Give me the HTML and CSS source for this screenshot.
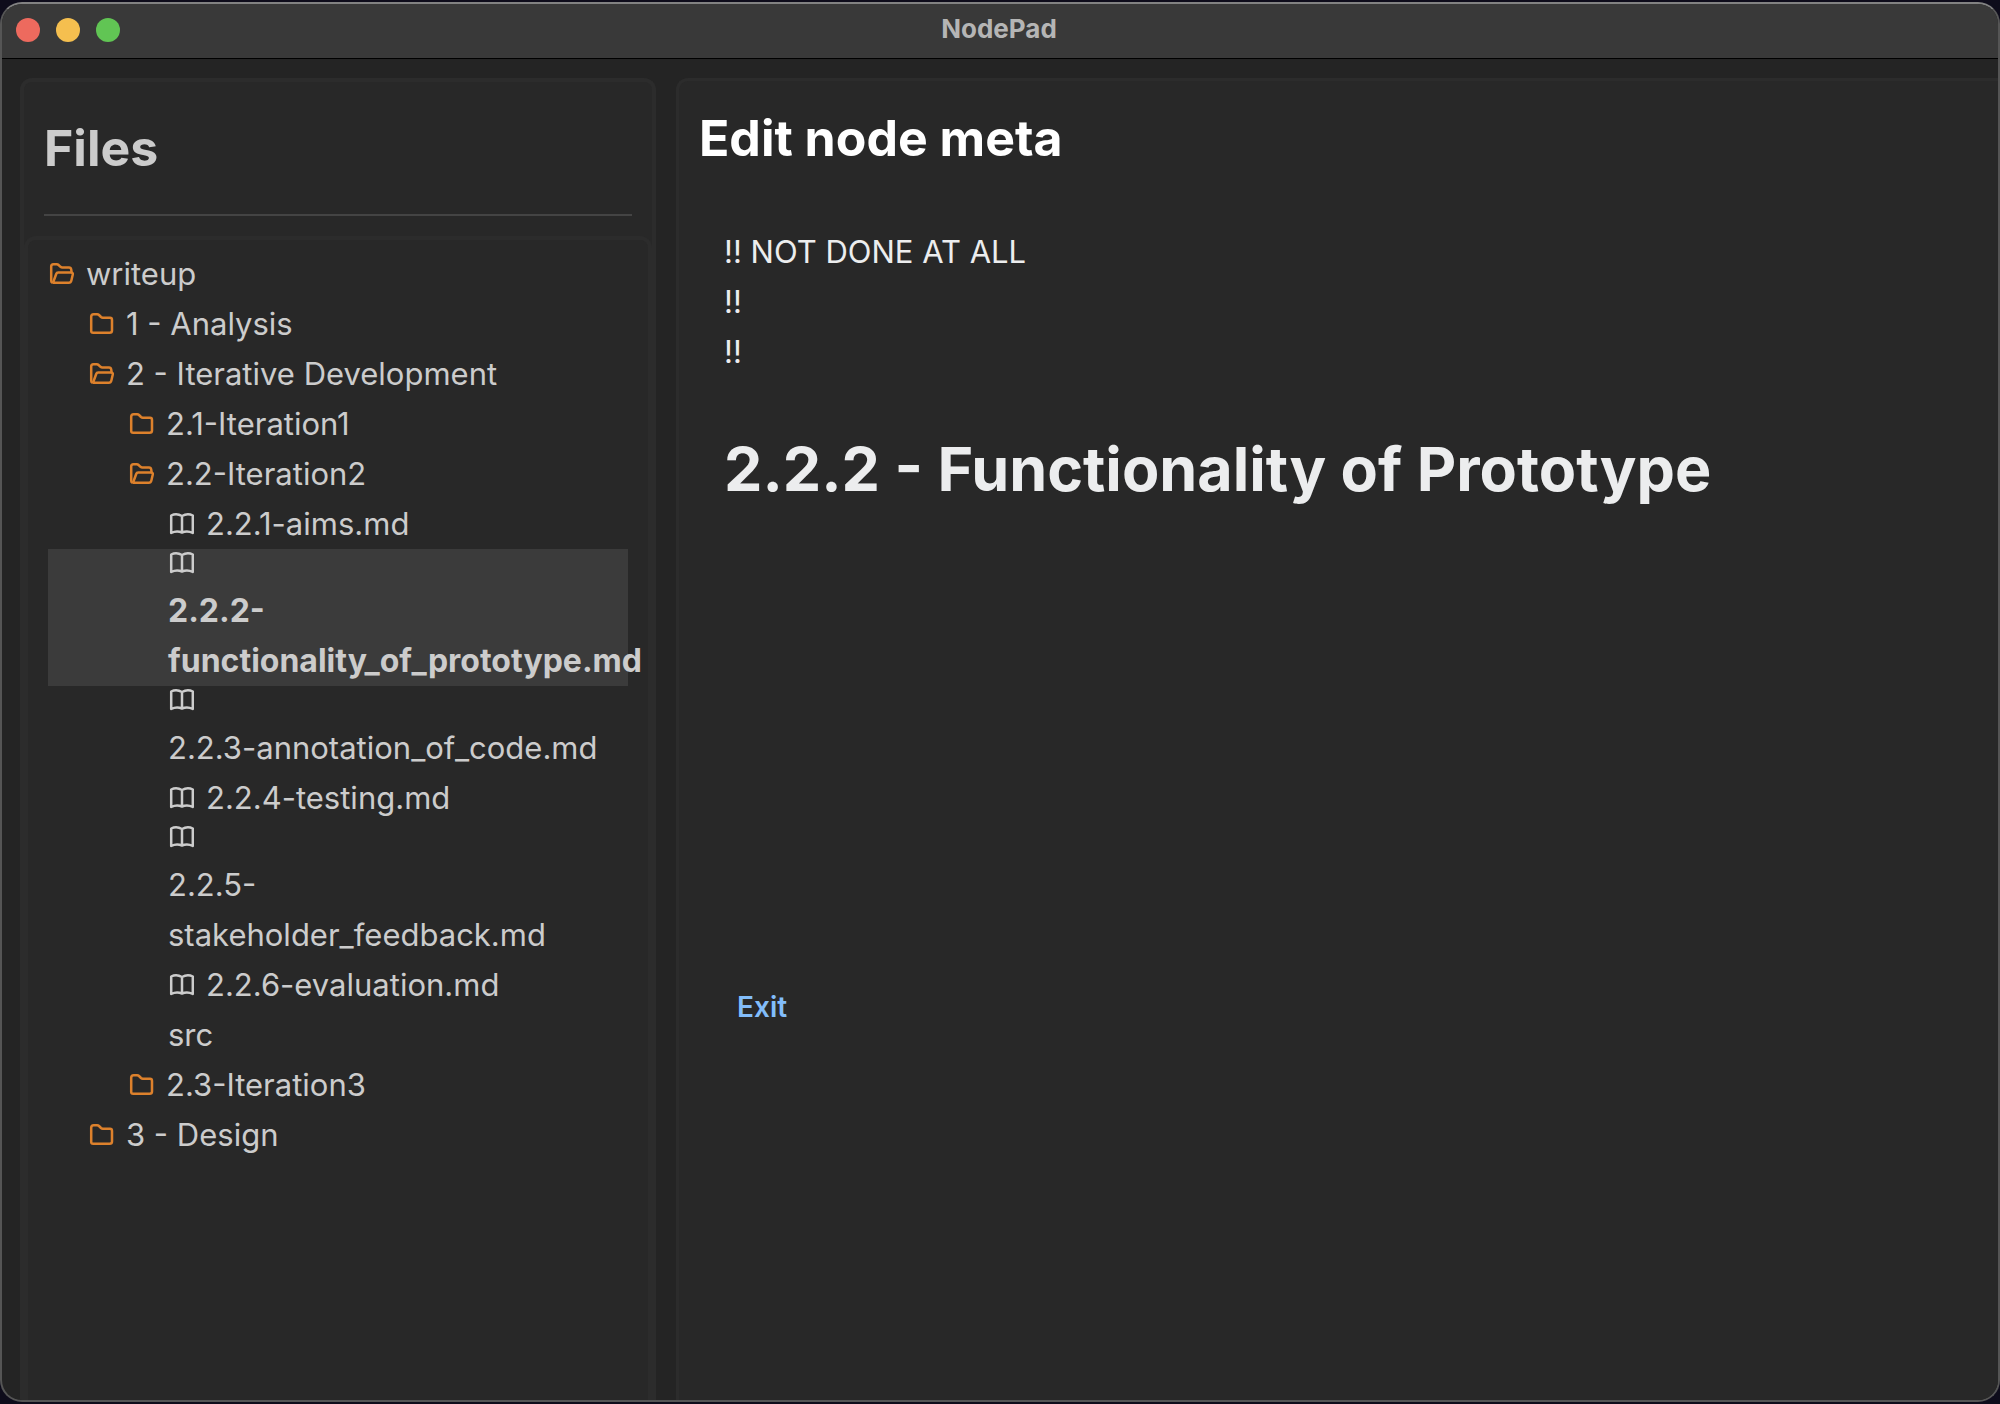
FILE: index.html
```html
<!DOCTYPE html>
<html lang="en">
<head>
<meta charset="utf-8">
<title>NodePad</title>
<link rel="stylesheet" href="styles.css">
</head>
<body>
<svg class="symbols" aria-hidden="true">
  <symbol id="folder" viewBox="-1 0 26 24">
    <path d="M2.2 19V4.800Q2.200 2.200 4.800 2.200H8.200Q9.200 2.200 10 3L12 5Q12.800 5.700 13.800 5.700H21Q23 5.700 23 7.900V18.500Q23 20.800 20.600 20.800H4.200Q2.200 20.800 2.200 19Z" fill="none" stroke="currentColor" stroke-width="2.500" stroke-linejoin="round"/>
  </symbol>
  <symbol id="folder-open" viewBox="-1 0 26 24">
    <path d="M3 20.500Q2.200 20 2.200 18.800V4.500Q2.200 2.200 4.500 2.200H7.800Q8.800 2.200 9.600 3L11.500 4.800Q12.300 5.500 13.300 5.500H20Q22 5.500 22.300 7.800L22.500 10.200" fill="none" stroke="currentColor" stroke-width="2.500" stroke-linecap="round"/>
    <path d="M4 20.800L7.200 12Q7.700 10.600 9.200 10.600H22Q24.200 10.600 23.800 12.400L22.300 18.800Q21.800 20.800 19.800 20.800H4" fill="none" stroke="currentColor" stroke-width="2.500" stroke-linejoin="round"/>
  </symbol>
  <symbol id="book" viewBox="-1 0 26 24">
    <path d="M13 4Q7.500 0.800 2.200 3.500V21Q7.500 18.300 13 20.500Q18.500 18.300 23.800 21V3.500Q18.500 0.800 13 4V20.500" fill="none" stroke="currentColor" stroke-width="2.500" stroke-linejoin="round"/>
  </symbol>
</svg>
<div class="window">
  <header class="titlebar">
    <div class="controls">
      <button class="control control-close" type="button" aria-label="Close"></button>
      <button class="control control-minimize" type="button" aria-label="Minimize"></button>
      <button class="control control-zoom" type="button" aria-label="Zoom"></button>
    </div>
    <div class="window-title">NodePad</div>
  </header>
  <div class="workspace">
    <aside class="sidebar">
      <h2 class="sidebar-title">Files</h2>
      <hr class="divider">
      <nav class="tree" aria-label="Files">
        <ul class="level">
          <li><a class="item depth-0" href="#writeup"><svg class="icon folder"><use href="#folder-open"/></svg><span>writeup</span></a>
            <ul class="level">
              <li><a class="item depth-1" href="#analysis"><svg class="icon folder"><use href="#folder"/></svg><span>1 - Analysis</span></a></li>
              <li><a class="item depth-1" href="#development"><svg class="icon folder"><use href="#folder-open"/></svg><span>2 - Iterative Development</span></a>
                <ul class="level">
                  <li><a class="item depth-2" href="#iteration1"><svg class="icon folder"><use href="#folder"/></svg><span>2.1-Iteration1</span></a></li>
                  <li><a class="item depth-2" href="#iteration2"><svg class="icon folder"><use href="#folder-open"/></svg><span>2.2-Iteration2</span></a>
                    <ul class="level">
                      <li><a class="item depth-3" href="#aims"><svg class="icon"><use href="#book"/></svg><span>2.2.1-aims.md</span></a></li>
                      <li><a class="item depth-3 stacked selected" href="#functionality" aria-current="page"><svg class="icon"><use href="#book"/></svg><span>2.2.2-<br>functionality_of_prototype.md</span></a></li>
                      <li><a class="item depth-3 stacked" href="#annotation"><svg class="icon"><use href="#book"/></svg><span>2.2.3-annotation_of_code.md</span></a></li>
                      <li><a class="item depth-3" href="#testing"><svg class="icon"><use href="#book"/></svg><span>2.2.4-testing.md</span></a></li>
                      <li><a class="item depth-3 stacked" href="#feedback"><svg class="icon"><use href="#book"/></svg><span>2.2.5-<br>stakeholder_feedback.md</span></a></li>
                      <li><a class="item depth-3" href="#evaluation"><svg class="icon"><use href="#book"/></svg><span>2.2.6-evaluation.md</span></a></li>
                      <li><a class="item depth-3" href="#src"><span>src</span></a></li>
                    </ul>
                  </li>
                  <li><a class="item depth-2" href="#iteration3"><svg class="icon folder"><use href="#folder"/></svg><span>2.3-Iteration3</span></a></li>
                </ul>
              </li>
              <li><a class="item depth-1" href="#design"><svg class="icon folder"><use href="#folder"/></svg><span>3 - Design</span></a></li>
            </ul>
          </li>
        </ul>
      </nav>
    </aside>
    <main class="editor">
      <h2 class="editor-title">Edit node meta</h2>
      <article class="document">
        <p class="note">!! NOT DONE AT ALL<br>!!<br>!!</p>
        <h1 class="heading">2.2.2 - Functionality of Prototype</h1>
      </article>
      <button class="exit" type="button">Exit</button>
    </main>
  </div>
</div>
</body>
</html>
```
FILE: styles.css
```css
* {
  box-sizing: border-box;
}

body {
  margin: 0;
  background: #0e0c1b;
  color: #cccccc;
  font-family: Inter, "Liberation Sans", sans-serif;
}

.symbols {
  display: none;
}

.window {
  display: flex;
  flex-direction: column;
  min-height: calc(100vh - 4px);
  margin: 2px 0;
  overflow: hidden;
  border: 2px solid #555555;
  border-top-color: #828282;
  border-radius: 22px;
  background: #242424;
}

.titlebar {
  display: grid;
  grid-template-columns: 1fr auto 1fr;
  align-items: center;
  height: 55px;
  padding: 0 16px 2px 14px;
  border-bottom: 1px solid #000000;
  background: #393939;
}

.controls {
  display: flex;
  gap: 16px;
}

.control {
  width: 24px;
  height: 24px;
  padding: 0;
  border: 0;
  border-radius: 50%;
}

.control-close {
  background: #ed6a5e;
}

.control-minimize {
  background: #f5bf4f;
}

.control-zoom {
  background: #61c554;
}

.window-title {
  padding-bottom: 2px;
  color: #b5b5b5;
  font-size: 26px;
  font-weight: 700;
  line-height: 32px;
}

.workspace {
  display: grid;
  grid-template-columns: 636px 1fr;
  flex: 1;
  gap: 20px;
  padding: 19px 0 0 18px;
}

.sidebar {
  display: flex;
  flex-direction: column;
  border: 4px solid #2c2c2c;
  border-bottom: 0;
  border-radius: 12px 12px 0 0;
  background: #282828;
}

.sidebar-title {
  margin: 34px 20px 0;
  font-size: 50px;
  font-weight: 700;
  line-height: 64px;
}

.divider {
  width: auto;
  height: 2px;
  margin: 34px 20px 20px;
  border: 0;
  background: #444444;
}

.tree {
  flex: 1;
  padding: 9px 20px;
  border: 4px solid #2c2c2c;
  border-bottom: 0;
  border-radius: 12px 12px 0 0;
}

.level {
  margin: 0;
  padding: 0;
  list-style: none;
}

.item {
  display: flex;
  align-items: center;
  gap: 12px;
  color: inherit;
  font-size: 31px;
  line-height: 50px;
  text-decoration: none;
  white-space: nowrap;
}

.depth-1 {
  padding-left: 40px;
}

.depth-2 {
  padding-left: 80px;
}

.depth-3 {
  padding-left: 120px;
}

.stacked {
  flex-direction: column;
  align-items: flex-start;
  gap: 11px;
}

.stacked .icon {
  margin-top: 2px;
}

.selected {
  background: #3b3b3b;
  font-size: 32px;
  font-weight: 700;
}

.icon {
  flex: none;
  width: 26px;
  height: 24px;
}

.folder {
  color: #dd812c;
}

.editor {
  border: 3px solid #2c2c2c;
  border-width: 3px 0 0 3px;
  border-radius: 12px 0 0 0;
  background: #282828;
}

.editor-title {
  margin: 25px 20px 0;
  color: #ffffff;
  font-size: 50px;
  font-weight: 700;
  line-height: 64px;
}

.document {
  min-height: 806px;
  padding: 57px 45px 0;
  color: #ecedee;
}

.note {
  margin: 0;
  font-size: 31px;
  line-height: 50px;
}

.heading {
  margin: 52px 0 0;
  font-size: 61px;
  font-weight: 700;
  line-height: 80px;
}

.exit {
  margin-left: 44px;
  padding: 14px;
  border: 0;
  background: none;
  color: #82bdfa;
  font: 600 28px/34px Inter, "Liberation Sans", sans-serif;
}
```
